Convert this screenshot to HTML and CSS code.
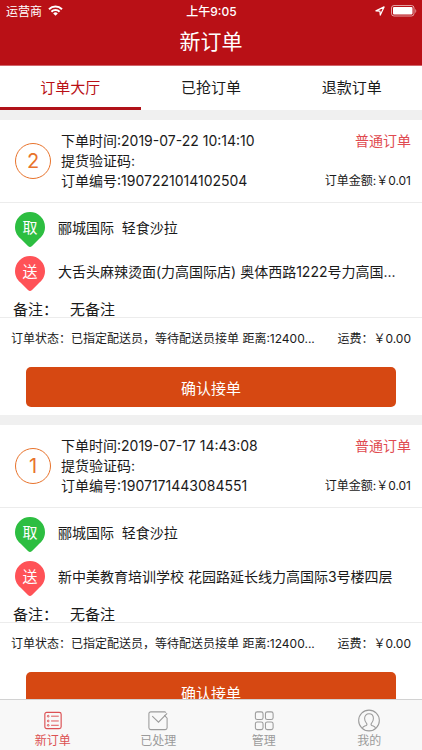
FILE: index.html
```html
<!DOCTYPE html>
<html lang="zh-CN">
<head>
<meta charset="utf-8">
<meta name="viewport" content="width=device-width, initial-scale=1">
<title>新订单</title>
<link rel="stylesheet" href="styles.css">
</head>
<body>
<header class="header">
  <div class="status">
    <div class="status-left">
      <span>运营商</span>
      <svg width="15" height="11" viewBox="0 0 15 11" fill="none" stroke="#fff" stroke-width="2"><path d="M1 4.2a9.3 9.3 0 0 1 13 0M3.4 6.8a5.8 5.8 0 0 1 8.2 0"/><path d="M7.5 10.7 5.2 8.4a3.3 3.3 0 0 1 4.6 0z" fill="#fff" stroke="none"/></svg>
    </div>
    <span class="clock">上午9:05</span>
    <div class="status-right">
      <svg width="10" height="10" viewBox="0 0 10 10" fill="none" stroke="#fff" stroke-width="1.2" stroke-linejoin="round"><path d="M.9 4.9 9.1.9 5.3 9.1 4.9 5.1z"/></svg>
      <svg width="26" height="12" viewBox="0 0 26 12"><rect x=".5" y=".5" width="22.500" height="10.500" rx="2.500" fill="none" stroke="#fff" stroke-opacity=".6"/><rect x="2" y="2" width="19.500" height="7.500" rx="1" fill="#fff"/><path d="M24.300 4v4c1.300-.5 1.300-3.500 0-4z" fill="#fff" fill-opacity=".6"/></svg>
    </div>
  </div>
  <h1 class="title">新订单</h1>
</header>
<nav class="tabs">
  <a class="tab tab-active" href="#hall">订单大厅</a>
  <a class="tab" href="#taken">已抢订单</a>
  <a class="tab" href="#refund">退款订单</a>
</nav>
<main class="list">
  <article class="card">
    <div class="card-head">
      <span class="number">2</span>
      <div class="info">
        <div class="line"><span>下单时间:2019-07-22 10:14:10</span><span class="kind">普通订单</span></div>
        <div class="line"><span>提货验证码:</span></div>
        <div class="line"><span>订单编号:1907221014102504</span><span class="amount">订单金额:￥0.01</span></div>
      </div>
    </div>
    <div class="stops">
      <div class="stop"><span class="pin pin-from"><svg width="30" height="35" viewBox="0 0 30 35"><path d="M15 0a15 15 0 0 1 15 15c0 6-3 9.500-6.500 12.500L17 34q-2 2-4 0l-6.500-6.500C3 24.500 0 21 0 15A15 15 0 0 1 15 0z"/></svg><span class="pin-text">取</span></span><span class="place">郦城国际&nbsp; 轻食沙拉</span></div>
      <div class="stop"><span class="pin pin-to"><svg width="30" height="35" viewBox="0 0 30 35"><path d="M15 0a15 15 0 0 1 15 15c0 6-3 9.500-6.500 12.500L17 34q-2 2-4 0l-6.500-6.500C3 24.500 0 21 0 15A15 15 0 0 1 15 0z"/></svg><span class="pin-text">送</span></span><span class="place">大舌头麻辣烫面(力高国际店) 奥体西路1222号力高国...</span></div>
    </div>
    <div class="remark"><span class="remark-label">备注：</span><span>无备注</span></div>
    <div class="state"><span class="state-text">订单状态：已指定配送员，等待配送员接单 距离:12400...</span><span>运费：￥0.00</span></div>
    <button class="confirm" type="button">确认接单</button>
  </article>
  <article class="card">
    <div class="card-head">
      <span class="number">1</span>
      <div class="info">
        <div class="line"><span>下单时间:2019-07-17 14:43:08</span><span class="kind">普通订单</span></div>
        <div class="line"><span>提货验证码:</span></div>
        <div class="line"><span>订单编号:1907171443084551</span><span class="amount">订单金额:￥0.01</span></div>
      </div>
    </div>
    <div class="stops">
      <div class="stop"><span class="pin pin-from"><svg width="30" height="35" viewBox="0 0 30 35"><path d="M15 0a15 15 0 0 1 15 15c0 6-3 9.500-6.500 12.500L17 34q-2 2-4 0l-6.500-6.500C3 24.500 0 21 0 15A15 15 0 0 1 15 0z"/></svg><span class="pin-text">取</span></span><span class="place">郦城国际&nbsp; 轻食沙拉</span></div>
      <div class="stop"><span class="pin pin-to"><svg width="30" height="35" viewBox="0 0 30 35"><path d="M15 0a15 15 0 0 1 15 15c0 6-3 9.500-6.500 12.500L17 34q-2 2-4 0l-6.500-6.500C3 24.500 0 21 0 15A15 15 0 0 1 15 0z"/></svg><span class="pin-text">送</span></span><span class="place">新中美教育培训学校 花园路延长线力高国际3号楼四层</span></div>
    </div>
    <div class="remark"><span class="remark-label">备注：</span><span>无备注</span></div>
    <div class="state"><span class="state-text">订单状态：已指定配送员，等待配送员接单 距离:12400...</span><span>运费：￥0.00</span></div>
    <button class="confirm" type="button">确认接单</button>
  </article>
</main>
<nav class="bottom">
  <a class="item item-active" href="#new"><svg width="24" height="24" viewBox="0 0 24 24" fill="none" stroke="currentColor"><rect x="3.500" y="3.500" width="17" height="17" rx="2" stroke-width="1.200"/><path d="M10 7.500h8M10 12.500h8M10 17h8"/><circle cx="7" cy="7.500" r=".9"/><circle cx="7" cy="12.500" r=".9"/><circle cx="7" cy="17" r=".9"/></svg><span>新订单</span></a>
  <a class="item" href="#done"><svg width="24" height="24" viewBox="0 0 24 24" fill="none" stroke="currentColor" stroke-width="1.100"><path d="M19.500 3H4.500a2 2 0 0 0-2 2v14.500a2 2 0 0 0 2 2h15a2 2 0 0 0 2-2V9.500L18.500 6.500M19.500 3l.8.800"/><path d="m6 7.500 6.500 6.300L21.500 4.500"/></svg><span>已处理</span></a>
  <a class="item" href="#manage"><svg width="24" height="24" viewBox="0 0 24 24" fill="none" stroke="currentColor" stroke-width="1.100"><rect x="3" y="3" width="8" height="8" rx="2"/><rect x="13.500" y="3" width="8" height="8" rx="2"/><rect x="3" y="13.500" width="8" height="8" rx="2"/><rect x="13.500" y="13.500" width="8" height="8" rx="2"/></svg><span>管理</span></a>
  <a class="item" href="#me"><svg width="24" height="24" viewBox="0 0 24 24" fill="none" stroke="currentColor" stroke-width="1.100"><circle cx="12" cy="12" r="10.800"/><path d="M5 20.200c.6-2 2.500-2.300 4-3 1-.5 1-1.300.6-2-1.500-1.500-2.200-3.300-2.200-5.200 0-3 1.900-5 4.600-5s4.600 2 4.600 5c0 1.900-.7 3.700-2.200 5.200-.4.7-.4 1.500.6 2 1.500.7 3.400 1 4 3"/></svg><span>我的</span></a>
</nav>
</body>
</html>
```
FILE: styles.css
```css
* { box-sizing: border-box; }
body {
  margin: 0;
  height: 100vh;
  display: flex;
  flex-direction: column;
  background: #f0f0f0;
  color: #1a1a1a;
  font-family: Inter, "Noto Sans CJK SC", sans-serif;
  font-size: 14px;
}
a { color: inherit; text-decoration: none; }
.header {
  flex: none;
  background: #b91016;
  color: #fff;
  border-bottom: 1px solid #d0646a;
}
.status {
  display: grid;
  grid-template-columns: 1fr auto 1fr;
  align-items: center;
  height: 21px;
  padding: 0 5px 0 6px;
  font-size: 12px;
}
.status-left, .status-right { display: flex; align-items: center; gap: 6px; }
.status-right { justify-content: flex-end; }
.clock { font-weight: 500; }
.title {
  margin: 0;
  font-size: 21px;
  font-weight: 400;
  line-height: 42px;
  height: 44px;
  text-align: center;
}
.tabs { flex: none; display: flex; background: #fff; }
.tab {
  flex: 1;
  height: 44px;
  line-height: 44px;
  font-size: 15px;
  text-align: center;
}
.tab-active { color: #b91016; box-shadow: inset 0 -3px #b01218; }
.list { flex: 1; min-height: 0; overflow: hidden; }
.card {
  margin-top: 10px;
  padding-bottom: 8px;
  background: #fff;
}
.card-head {
  display: flex;
  align-items: center;
  gap: 10px;
  padding: 11px 11px 11px 15px;
  border-bottom: 1px solid #ececec;
}
.number {
  flex: none;
  width: 36px;
  height: 36px;
  border: 1px solid #e8732c;
  border-radius: 50%;
  color: #e8732c;
  font-size: 20px;
  line-height: 34px;
  text-align: center;
}
.info { flex: 1; min-width: 0; }
.line {
  display: flex;
  justify-content: space-between;
  height: 20px;
  line-height: 20px;
  white-space: nowrap;
}
.kind { color: #e04a50; }
.amount { font-size: 12px; }
.stops { padding: 4px 11px 0 15px; }
.stop { display: flex; align-items: center; gap: 13px; height: 44px; }
.pin { flex: none; display: grid; width: 30px; height: 35px; }
.pin svg, .pin-text { grid-area: 1 / 1; }
.pin-from { fill: #2dbe41; }
.pin-to { fill: #ff5257; }
.pin-text {
  color: #fff;
  font-size: 15px;
  line-height: 32px;
  text-align: center;
}
.place { overflow: hidden; padding-bottom: 2px; line-height: 20px; white-space: nowrap; }
.remark {
  display: flex;
  padding-left: 13px;
  border-bottom: 1px solid #ececec;
  font-size: 15px;
  line-height: 30px;
  height: 23px;
}
.remark-label { width: 57px; }
.state {
  display: flex;
  justify-content: space-between;
  gap: 10px;
  padding: 10px 11px 0;
  font-size: 12px;
  line-height: 22px;
  white-space: nowrap;
}
.state-text { overflow: hidden; }
.confirm {
  display: block;
  width: calc(100% - 52px);
  height: 40px;
  margin: 17px 26px 0;
  padding: 0;
  border: 0;
  border-radius: 5px;
  background: #d64812;
  color: #fff;
  font-family: inherit;
  font-size: 15px;
}
.bottom {
  flex: none;
  display: flex;
  height: 51px;
  border-top: 1px solid #d2d2d2;
  background: #f8f8f8;
  color: #9b9b9b;
}
.item {
  flex: 1;
  display: flex;
  flex-direction: column;
  align-items: center;
  padding-top: 9px;
  font-size: 12px;
  line-height: 18px;
}
.item-active { color: #dc5053; }
```
